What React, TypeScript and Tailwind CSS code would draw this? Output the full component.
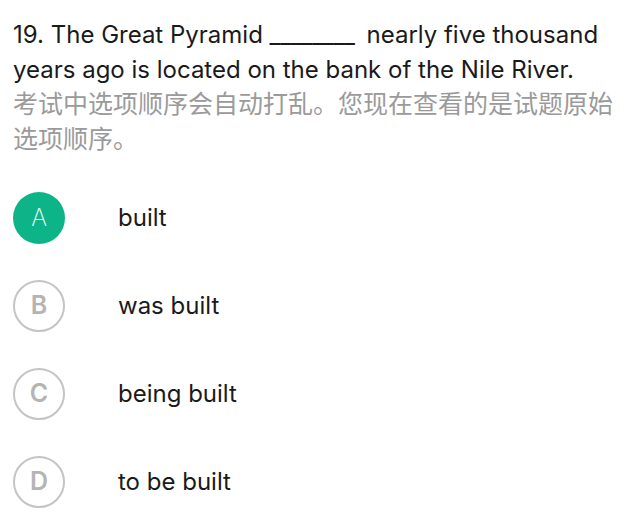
import React from 'react';

const options = [
  { key: 'A', text: 'built', selected: true },
  { key: 'B', text: 'was built', selected: false },
  { key: 'C', text: 'being built', selected: false },
  { key: 'D', text: 'to be built', selected: false },
];

export default function App() {
  return (
    <div className="min-h-[512px] w-[633px] bg-white pl-[13px] pr-[12px] pt-[17px] font-['Inter','Noto_Sans_CJK_SC',sans-serif]">
      <p className="text-[24px] leading-[35px] text-[#1a1a1a]">
        19. The Great Pyramid <span className="mr-[5px] tracking-[-0.3px]">________</span> nearly five thousand years ago is located on the bank of the Nile River.
      </p>
      <p className="text-[25px] leading-[35px] text-[#9a9a9a]">
        考试中选项顺序会自动打乱。您现在查看的是试题原始选项顺序。
      </p>

      <div className="mt-[35px] flex flex-col gap-[36px]">
        {options.map((o) => (
          <div key={o.key} className="flex items-center">
            <div
              className={
                o.selected
                  ? 'flex h-[52px] w-[52px] items-center justify-center rounded-full bg-[#0cb488] text-[24px] font-extralight text-white'
                  : 'flex h-[52px] w-[52px] items-center justify-center rounded-full border-2 border-[#c4c4c4] text-[25px] font-semibold text-[#b4b4b4]'
              }
            >
              {o.key}
            </div>
            <span className="ml-[53px] text-[24px] text-[#1a1a1a]">{o.text}</span>
          </div>
        ))}
      </div>
    </div>
  );
}
